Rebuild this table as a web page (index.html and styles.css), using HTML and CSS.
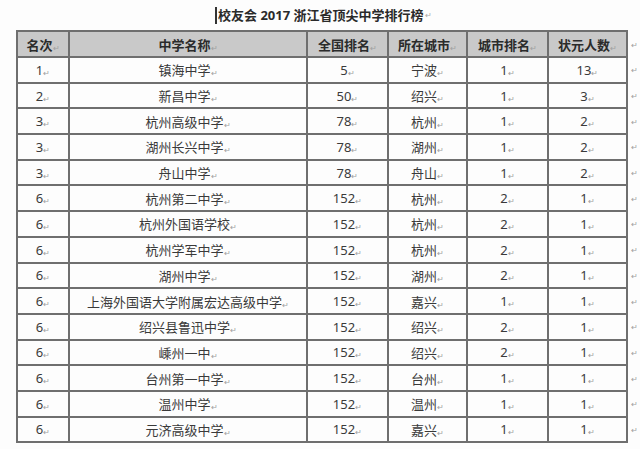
FILE: index.html
```html
<!DOCTYPE html>
<html lang="zh">
<head>
<meta charset="utf-8">
<link rel="stylesheet" href="styles.css">
</head>
<body>
<div class="page">
  <h1 class="title"><span class="cursor"></span>校友会 2017 浙江省顶尖中学排行榜<span class="pm">↵</span></h1>
  <table class="rank">
    <colgroup>
      <col class="c1"><col class="c2"><col class="c3"><col class="c4"><col class="c5"><col class="c6"><col class="c7">
    </colgroup>
    <thead>
      <tr><th>名次<i>↵</i></th><th>中学名称<i>↵</i></th><th>全国排名<i>↵</i></th><th>所在城市<i>↵</i></th><th>城市排名<i>↵</i></th><th>状元人数<i>↵</i></th><td class="eol">↵</td></tr>
    </thead>
    <tbody>
      <tr><td>1<i>↵</i></td><td>镇海中学<i>↵</i></td><td>5<i>↵</i></td><td>宁波<i>↵</i></td><td>1<i>↵</i></td><td>13<i>↵</i></td><td class="eol">↵</td></tr>
      <tr><td>2<i>↵</i></td><td>新昌中学<i>↵</i></td><td>50<i>↵</i></td><td>绍兴<i>↵</i></td><td>1<i>↵</i></td><td>3<i>↵</i></td><td class="eol">↵</td></tr>
      <tr><td>3<i>↵</i></td><td>杭州高级中学<i>↵</i></td><td>78<i>↵</i></td><td>杭州<i>↵</i></td><td>1<i>↵</i></td><td>2<i>↵</i></td><td class="eol">↵</td></tr>
      <tr><td>3<i>↵</i></td><td>湖州长兴中学<i>↵</i></td><td>78<i>↵</i></td><td>湖州<i>↵</i></td><td>1<i>↵</i></td><td>2<i>↵</i></td><td class="eol">↵</td></tr>
      <tr><td>3<i>↵</i></td><td>舟山中学<i>↵</i></td><td>78<i>↵</i></td><td>舟山<i>↵</i></td><td>1<i>↵</i></td><td>2<i>↵</i></td><td class="eol">↵</td></tr>
      <tr><td>6<i>↵</i></td><td>杭州第二中学<i>↵</i></td><td>152<i>↵</i></td><td>杭州<i>↵</i></td><td>2<i>↵</i></td><td>1<i>↵</i></td><td class="eol">↵</td></tr>
      <tr><td>6<i>↵</i></td><td>杭州外国语学校<i>↵</i></td><td>152<i>↵</i></td><td>杭州<i>↵</i></td><td>2<i>↵</i></td><td>1<i>↵</i></td><td class="eol">↵</td></tr>
      <tr><td>6<i>↵</i></td><td>杭州学军中学<i>↵</i></td><td>152<i>↵</i></td><td>杭州<i>↵</i></td><td>2<i>↵</i></td><td>1<i>↵</i></td><td class="eol">↵</td></tr>
      <tr><td>6<i>↵</i></td><td>湖州中学<i>↵</i></td><td>152<i>↵</i></td><td>湖州<i>↵</i></td><td>2<i>↵</i></td><td>1<i>↵</i></td><td class="eol">↵</td></tr>
      <tr><td>6<i>↵</i></td><td>上海外国语大学附属宏达高级中学<i>↵</i></td><td>152<i>↵</i></td><td>嘉兴<i>↵</i></td><td>1<i>↵</i></td><td>1<i>↵</i></td><td class="eol">↵</td></tr>
      <tr><td>6<i>↵</i></td><td>绍兴县鲁迅中学<i>↵</i></td><td>152<i>↵</i></td><td>绍兴<i>↵</i></td><td>2<i>↵</i></td><td>1<i>↵</i></td><td class="eol">↵</td></tr>
      <tr><td>6<i>↵</i></td><td>嵊州一中<i>↵</i></td><td>152<i>↵</i></td><td>绍兴<i>↵</i></td><td>2<i>↵</i></td><td>1<i>↵</i></td><td class="eol">↵</td></tr>
      <tr><td>6<i>↵</i></td><td>台州第一中学<i>↵</i></td><td>152<i>↵</i></td><td>台州<i>↵</i></td><td>1<i>↵</i></td><td>1<i>↵</i></td><td class="eol">↵</td></tr>
      <tr><td>6<i>↵</i></td><td>温州中学<i>↵</i></td><td>152<i>↵</i></td><td>温州<i>↵</i></td><td>1<i>↵</i></td><td>1<i>↵</i></td><td class="eol">↵</td></tr>
      <tr><td>6<i>↵</i></td><td>元济高级中学<i>↵</i></td><td>152<i>↵</i></td><td>嘉兴<i>↵</i></td><td>1<i>↵</i></td><td>1<i>↵</i></td><td class="eol">↵</td></tr>
    </tbody>
  </table>
</div>
</body>
</html>
```
FILE: styles.css
```css
html, body {
  margin: 0;
  padding: 0;
  background: #fdfdfd;
}
body {
  font-family: "Noto Sans", "Noto Sans CJK SC", sans-serif;
  color: #333;
}
.page {
  width: 640px;
  height: 449px;
  padding-left: 16px;
  box-sizing: border-box;
  overflow: hidden;
}
.title {
  margin: 0;
  height: 30px;
  line-height: 30px;
  font-size: 13px;
  font-weight: bold;
  color: #2a2a2a;
  padding-left: 199px;
  display: flex;
  align-items: center;
  white-space: nowrap;
}
.cursor {
  display: inline-block;
  width: 2px;
  height: 17px;
  background: #333;
  margin-right: 1px;
}
.pm {
  font-size: 8px;
  color: #aaa;
  font-weight: normal;
  margin-left: 1px;
}
.rank {
  border-collapse: collapse;
  table-layout: fixed;
  width: 624px;
  font-size: 13px;
}
.c1 { width: 52px; }
.c2 { width: 238px; }
.c3 { width: 81px; }
.c4 { width: 79px; }
.c5 { width: 81px; }
.c6 { width: 79px; }
.c7 { width: 14px; }
.rank th, .rank td {
  border: 2px solid #6f6f6f;
  text-align: center;
  padding: 0;
  white-space: nowrap;
  overflow: hidden;
}
.rank th {
  background: #c9c9c9;
  height: 24px;
  font-weight: bold;
  color: #2b2b2b;
}
.rank td {
  height: 23.7px;
  color: #3a3a3a;
}
.rank i {
  font-style: normal;
  font-size: 8px;
  color: #a0a0a0;
  font-weight: normal;
  vertical-align: -1px;
}
.rank td.eol, .rank thead td.eol {
  border: none;
  background: none;
  text-align: left;
  padding-left: 3px;
  font-size: 8px;
  color: #a0a0a0;
}
```
